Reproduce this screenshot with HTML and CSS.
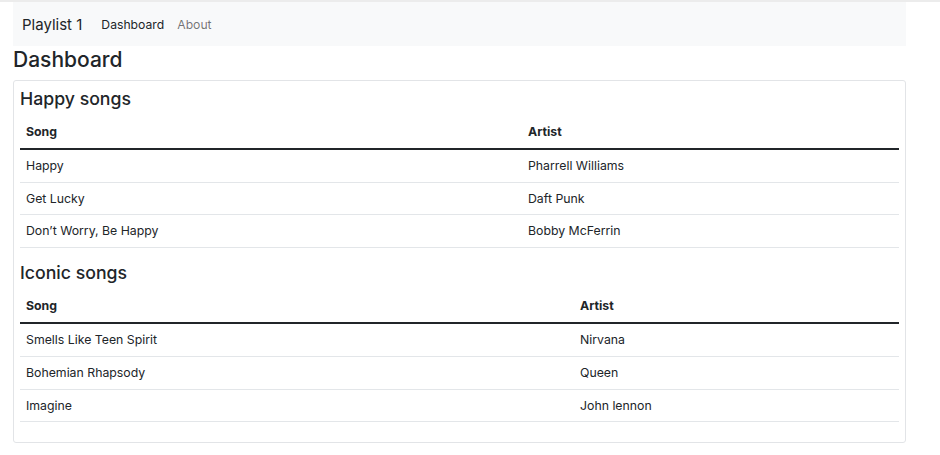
FILE: index.html
```html
<!DOCTYPE html>
<html>
<head>
<meta charset="utf-8">
<link rel="stylesheet" href="styles.css">
</head>
<body>
<div class="page">
  <nav class="navbar">
    <span class="brand">Playlist 1</span>
    <a class="nav-link active">Dashboard</a>
    <a class="nav-link">About</a>
  </nav>
  <h1 class="title">Dashboard</h1>
  <div class="card">
    <h3 class="card-title">Happy songs</h3>
    <table class="table happy">
      <thead><tr><th class="c1">Song</th><th>Artist</th></tr></thead>
      <tbody>
        <tr><td>Happy</td><td>Pharrell Williams</td></tr>
        <tr><td>Get Lucky</td><td>Daft Punk</td></tr>
        <tr><td>Don’t Worry, Be Happy</td><td>Bobby McFerrin</td></tr>
      </tbody>
    </table>
    <h3 class="card-title">Iconic songs</h3>
    <table class="table iconic">
      <thead><tr><th class="c1">Song</th><th>Artist</th></tr></thead>
      <tbody>
        <tr><td>Smells Like Teen Spirit</td><td>Nirvana</td></tr>
        <tr><td>Bohemian Rhapsody</td><td>Queen</td></tr>
        <tr><td>Imagine</td><td>John lennon</td></tr>
      </tbody>
    </table>
  </div>
</div>
</body>
</html>
```
FILE: styles.css
```css
html, body { margin: 0; padding: 0; background: #fff; }
body {
  border-top: 2px solid #ececec;
  font-family: Inter, "Liberation Sans", Arial, sans-serif;
  color: #212529;
}
.page { margin-left: 13px; width: 893px; }
.navbar {
  display: flex;
  align-items: center;
  height: 44px;
  background: #f8f9fa;
  padding-left: 9px;
}
.brand { font-size: 15px; margin-right: 19px; color: #212529; }
.nav-link { font-size: 12.2px; color: rgba(0,0,0,.55); margin-right: 13px; }
.nav-link.active { color: #212529; }
.title {
  font-size: 21px;
  font-weight: 500;
  line-height: 28px;
  margin: 0 0 6px 0;
}
.card {
  border: 1px solid #e2e4e7;
  border-radius: 3px;
  padding: 6px 6px 7px 6px;
}
.card-title {
  font-size: 17.7px;
  font-weight: 500;
  line-height: 24px;
  margin: 0 0 5px 0;
}
.table {
  width: 100%;
  border-collapse: collapse;
  margin-bottom: 13px;
  font-size: 12.3px;
}
.table th, .table td {
  text-align: left;
  padding: 6px 6px;
  line-height: 19.8px;
  border-bottom: 1px solid #e3e6e9;
}
.table th { font-weight: 700; border-bottom: 2px solid #212529; }
.happy .c1 { width: 490px; }
.iconic .c1 { width: 542px; }
```
